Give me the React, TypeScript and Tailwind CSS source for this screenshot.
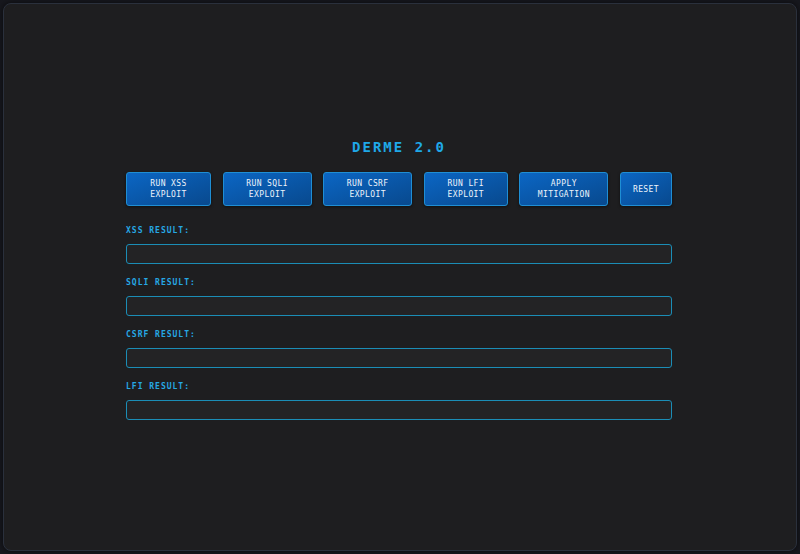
import React from "react";

const buttons = [
  { label: "RUN XSS EXPLOIT", w: "w-[85px]" },
  { label: "RUN SQLI EXPLOIT", w: "w-[89px]" },
  { label: "RUN CSRF EXPLOIT", w: "w-[89px]" },
  { label: "RUN LFI EXPLOIT", w: "w-[84px]" },
  { label: "APPLY MITIGATION", w: "w-[89px]" },
  { label: "RESET", w: "w-[52px]" },
];

const results = ["XSS RESULT:", "SQLI RESULT:", "CSRF RESULT:", "LFI RESULT:"];

export default function App() {
  return (
    <div
      className="h-[554px] w-full bg-[#17181e] p-[3px]"
      style={{ fontFamily: '"DejaVu Sans Mono", "Liberation Mono", monospace' }}
    >
      <div className="h-full rounded-lg border border-[#2a303c] bg-[#1e1e20] flex justify-center pt-[135px] shadow-[0_0_6px_rgba(0,0,0,0.6)]">
        <div className="w-[546px] mr-[2px] flex flex-col">
          <h1 className="text-center text-[14px] leading-[16px] font-bold tracking-[2px] text-[#1fa8e8]">
            DERME 2.0
          </h1>

          <div className="mt-[17px] flex justify-between">
            {buttons.map((b) => (
              <button
                key={b.label}
                type="button"
                className={`${b.w} h-[34px] rounded-[3px] border border-[#1f8ed4] bg-gradient-to-br from-[#0b66c4] to-[#08498e] px-1 text-[8px] leading-[11px] tracking-[0.4px] text-[#eef4fb] shadow-[0_1px_3px_rgba(0,0,0,0.5)]`}
              >
                {b.label}
              </button>
            ))}
          </div>

          <div className="mt-[19px] flex flex-col gap-[13px]">
            {results.map((r) => (
              <div key={r} className="flex flex-col">
                <div className="text-[8px] leading-[12px] font-bold tracking-[1px] text-[#26a8e4]">{r}</div>
                <div className="mt-[7px] h-[20px] rounded-[3px] border border-[#1b8db6] bg-[#232325]" />
              </div>
            ))}
          </div>
        </div>
      </div>
    </div>
  );
}
